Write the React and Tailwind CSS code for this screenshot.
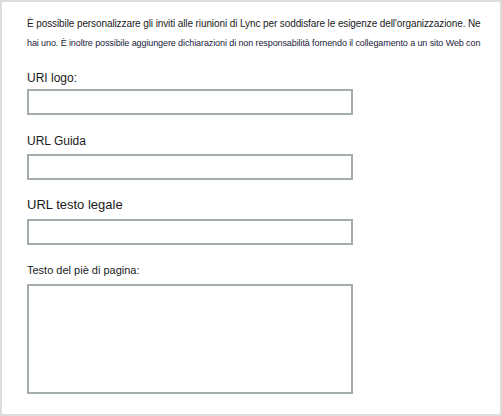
export default function App() {
  const font = { fontFamily: '"Liberation Sans", Arial, sans-serif' };
  return (
    <div
      className="w-[502px] h-[416px] border-2 border-[#dcdcdc] bg-white pl-[25px] pt-[12px] text-[#1a1a1a]"
      style={font}
    >
      <div className="h-[20px] text-[10px] leading-[20px] tracking-[-0.1px] whitespace-nowrap">
        È possibile personalizzare gli inviti alle riunioni di Lync per soddisfare le esigenze dell'organizzazione. Ne
      </div>
      <div className="h-[18px] text-[9px] leading-[18px] tracking-[-0.1px] whitespace-nowrap text-[#1a1a3a]">
        hai uno. È inoltre possibile aggiungere dichiarazioni di non responsabilità fornendo il collegamento a un sito Web con
      </div>

      <div className="mt-[18px] h-[16px] text-[12px] leading-[16px]">URI logo:</div>
      <div className="mt-[3px] w-[326px] h-[26px] border-2 border-[#a4acac] bg-white" />

      <div className="mt-[18px] h-[16px] text-[12px] leading-[16px]">URL Guida</div>
      <div className="mt-[5px] w-[326px] h-[26px] border-2 border-[#a4acac] bg-white" />

      <div className="mt-[17px] h-[16px] text-[13px] leading-[16px]">URL testo legale</div>
      <div className="mt-[6px] w-[326px] h-[26px] border-2 border-[#a4acac] bg-white" />

      <div className="mt-[18px] h-[14px] text-[11px] leading-[14px]">Testo del piè di pagina:</div>
      <div className="mt-[7px] w-[326px] h-[110px] border-2 border-[#a4acac] bg-white" />
    </div>
  );
}
